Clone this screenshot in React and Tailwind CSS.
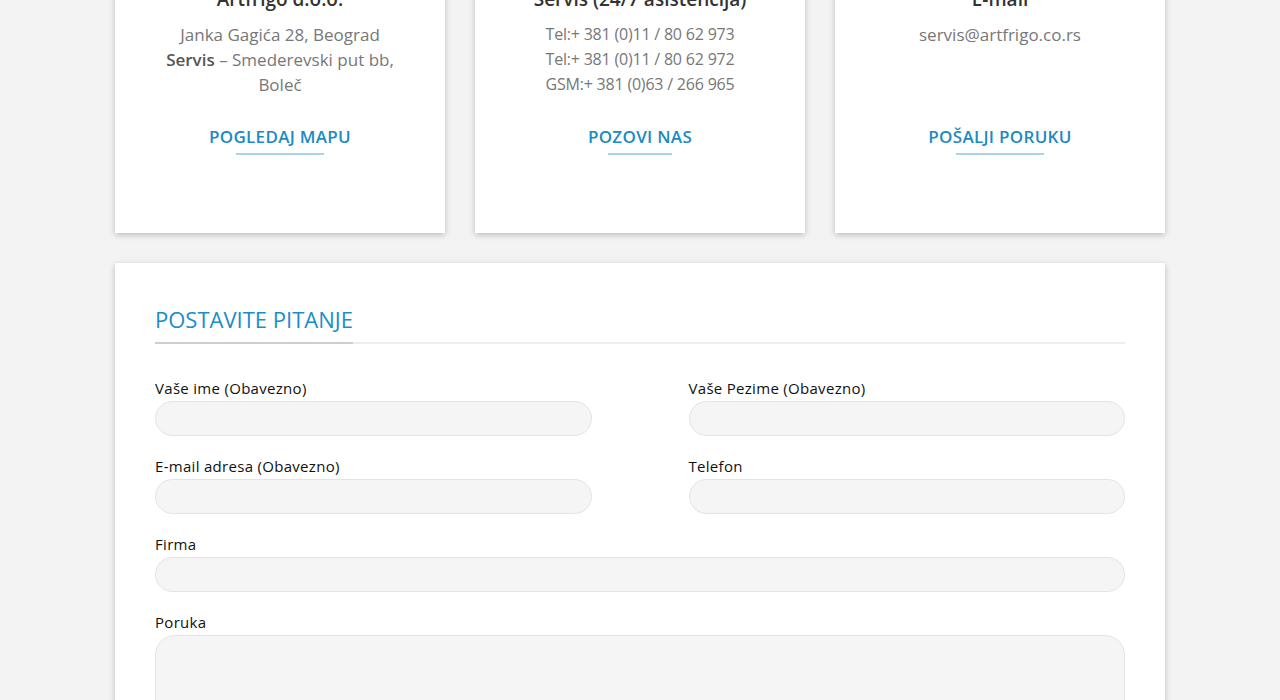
import React from "react";

const font = { fontFamily: '"Open Sans", "Liberation Sans", sans-serif' };

function Card({ title, children, link, textClass }) {
  return (
    <div className="bg-white shadow-[0_2px_6px_rgba(0,0,0,0.22)] pt-[21px] pb-[78px] text-center">
      <h3 className="text-[19px] leading-[26px] font-semibold text-[#333] mb-[10px]">{title}</h3>
      <div className={"h-[75px] leading-[25px] text-[#777] px-[40px] " + textClass}>{children}</div>
      <div className="mt-[30px] flex justify-center">
        <a href="#" className="inline-block text-[17px] leading-[20px] font-semibold text-[#1b8ac4] tracking-[0.3px]">
          {link}
          <span className="block mx-auto mt-[6px] h-[2px] w-[62%] bg-[#a9d4e8]"></span>
        </a>
      </div>
    </div>
  );
}

function Label({ children }) {
  return (
    <label className="block text-[15px] leading-[18px] font-medium text-[#111] tracking-[0.3px] mb-[4px]">{children}</label>
  );
}

function Field({ label, className = "" }) {
  return (
    <div className={className}>
      <Label>{label}</Label>
      <div className="h-[35px] rounded-full bg-[#f5f5f5] border border-[#e4e4e4]"></div>
    </div>
  );
}

export default function App() {
  return (
    <div className="h-[700px] overflow-hidden bg-[#f3f3f3]" style={font}>
      <div className="w-[1050px] mx-auto mt-[-35px]">
        <div className="grid grid-cols-3 gap-[30px]">
          <Card title="Artfrigo d.o.o." link="POGLEDAJ MAPU" textClass="text-[17px]">
            <p>Janka Gagića 28, Beograd</p>
            <p><b className="font-semibold text-[#555]">Servis</b> – Smederevski put bb, Boleč</p>
          </Card>
          <Card title="Servis (24/7 asistencija)" link="POZOVI NAS" textClass="text-[16px] tracking-[-0.2px]">
            <p>Tel:+ 381 (0)11 / 80 62 973</p>
            <p>Tel:+ 381 (0)11 / 80 62 972</p>
            <p>GSM:+ 381 (0)63 / 266 965</p>
          </Card>
          <Card title="E-mail" link="POŠALJI PORUKU" textClass="text-[17px]">
            <p>servis@artfrigo.co.rs</p>
          </Card>
        </div>

        <div className="mt-[30px] bg-white shadow-[0_2px_6px_rgba(0,0,0,0.22)] px-[40px] pt-[41px] pb-[40px]">
          <div className="flex border-b-2 border-[#eeeeee]">
            <h2 className="text-[22px] leading-[30px] text-[#1b8dc8] font-medium pb-[8px] border-b-2 border-[#cfcfcf] -mb-[2px]">
              POSTAVITE PITANJE
            </h2>
          </div>
          <div className="mt-[35px] grid grid-cols-2 gap-x-[97px] gap-y-[21px]">
            <Field label="Vaše ime (Obavezno)" />
            <Field label="Vaše Pezime (Obavezno)" />
            <Field label="E-mail adresa (Obavezno)" />
            <Field label="Telefon" />
            <Field label="Firma" className="col-span-2" />
            <div className="col-span-2">
              <Label>Poruka</Label>
              <div className="h-[160px] rounded-[20px] bg-[#f5f5f5] border border-[#e4e4e4]"></div>
            </div>
          </div>
        </div>
      </div>
    </div>
  );
}
